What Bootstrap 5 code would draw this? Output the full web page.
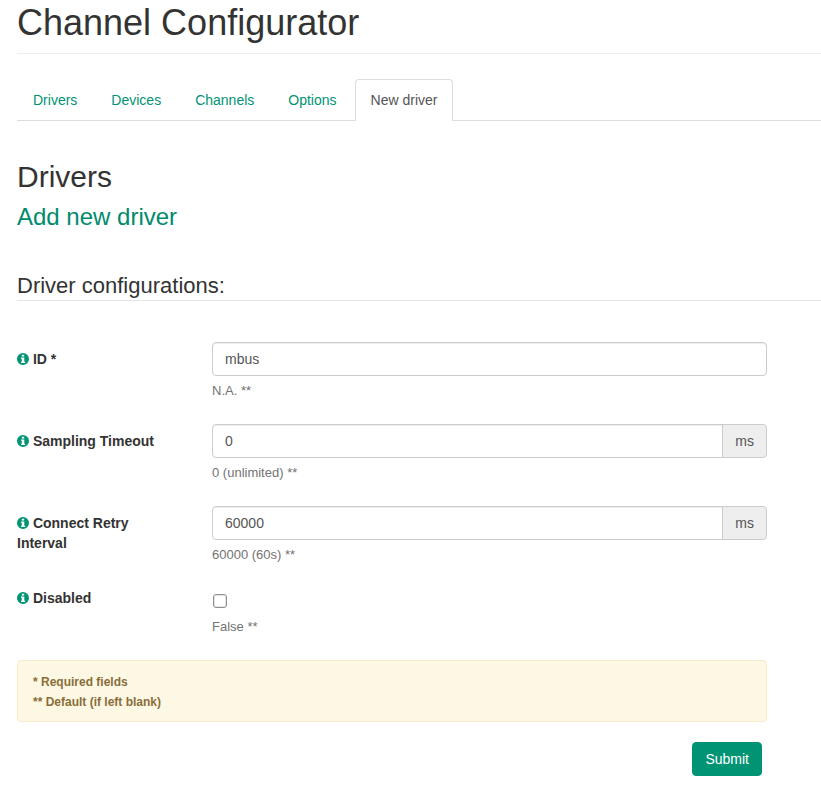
<!DOCTYPE html>
<html lang="en">
<head>
<meta charset="utf-8">
<meta name="viewport" content="width=device-width, initial-scale=1">
<title>Channel Configurator</title>
<link href="https://cdn.jsdelivr.net/npm/bootstrap@5.3.0/dist/css/bootstrap.min.css" rel="stylesheet">
<style>
body { font-family: "Liberation Sans", Arial, sans-serif; font-size: 14px; line-height: 20px; color: #333; --brand: #009374; }
.page { padding: 3px 0 12px 17px; }
h1, h2, h3, legend { color: #333; font-weight: 400; margin: 0; }
h1 { font-size: 36px; line-height: 40px; }
.page-title { padding-bottom: 10px; border-bottom: 1px solid #eee; margin-bottom: 25px; }
.nav-tabs { --bs-nav-link-padding-x: 15px; --bs-nav-link-padding-y: 10px; --bs-nav-link-color: var(--brand); --bs-nav-link-hover-color: #00614d; --bs-nav-tabs-border-color: #ddd; --bs-nav-tabs-border-radius: 4px; --bs-nav-tabs-link-active-color: #555; --bs-nav-tabs-link-active-bg: #fff; --bs-nav-tabs-link-active-border-color: #ddd #ddd #fff; gap: 2px; margin-bottom: 40px; }
h2 { font-size: 30px; line-height: 32px; margin-bottom: 10px; }
h3 { font-size: 24px; line-height: 28px; color: #008a6c; margin-bottom: 41px; }
legend { font-size: 22px; line-height: 28px; border-bottom: 1px solid #e5e5e5; margin-bottom: 41px; }
.config-form { padding-right: 54px; }
.config-form .row { --bs-gutter-x: 30px; margin-bottom: 23px; }
.config-form legend { width: calc(100% + 54px); }
.field-label { font-weight: 700; padding-top: 7px; }
.check-label { padding-top: 0; }
.info { width: 12px; height: 12px; fill: var(--brand); vertical-align: -1px; }
.form-control, .input-group-text { font-size: 14px; line-height: 20px; color: #555; padding: 6px 12px; border: 1px solid #ccc; border-radius: 4px; }
.form-control { box-shadow: inset 0 1px 1px rgba(0, 0, 0, .075); }
.input-group-text { background: #eee; }
.form-text { font-size: 13px; line-height: 20px; color: #737373; margin-top: 5px; }
.check-box { display: block; width: 14px; height: 14px; margin: 6px 0 9px 1px; appearance: none; background: #fff; border: 1px solid #8f8f8f; border-radius: 3px; box-shadow: inset 0 0 1px 1px #e4e4e4; }
.check-box:checked { background: var(--brand); }
.alert-note { font-size: 12px; font-weight: 700; color: #8a6d3b; background: #fcf8e3; border: 1px solid #faebcc; border-radius: 4px; padding: 11px 15px 9px; margin-bottom: 20px; }
.btn-brand { --bs-btn-color: #fff; --bs-btn-bg: var(--brand); --bs-btn-border-color: var(--brand); --bs-btn-hover-color: #fff; --bs-btn-hover-bg: #007a60; --bs-btn-hover-border-color: #007a60; --bs-btn-font-size: 14px; --bs-btn-line-height: 20px; --bs-btn-border-radius: 4px; margin-right: 5px; }
</style>
</head>
<body>
<svg class="d-none" aria-hidden="true">
  <symbol id="info-icon" viewBox="0 0 12 12">
    <path fill-rule="evenodd" d="M6 0a6 6 0 1 1 0 12A6 6 0 0 1 6 0ZM4.800 1.700V3.500h2.400V1.700ZM4 4.500v1.200h.8v3H4V10h4.200V8.700h-.9V4.500Z"/>
  </symbol>
</svg>
<main class="page">
  <header class="page-title"><h1>Channel Configurator</h1></header>
  <ul class="nav nav-tabs">
    <li class="nav-item"><a class="nav-link" href="#drivers">Drivers</a></li>
    <li class="nav-item"><a class="nav-link" href="#devices">Devices</a></li>
    <li class="nav-item"><a class="nav-link" href="#channels">Channels</a></li>
    <li class="nav-item"><a class="nav-link" href="#options">Options</a></li>
    <li class="nav-item"><a class="nav-link active" aria-current="page" href="#new">New driver</a></li>
  </ul>
  <h2>Drivers</h2>
  <h3>Add new driver</h3>
  <form class="config-form" id="new">
    <fieldset>
      <legend>Driver configurations:</legend>
      <div class="row">
        <label class="col-3 field-label" for="driver-id"><svg class="info" aria-hidden="true"><use href="#info-icon"/></svg> ID *</label>
        <div class="col-9">
          <input class="form-control" type="text" id="driver-id" value="mbus" required>
          <div class="form-text">N.A. **</div>
        </div>
      </div>
      <div class="row">
        <label class="col-3 field-label" for="timeout"><svg class="info" aria-hidden="true"><use href="#info-icon"/></svg> Sampling Timeout</label>
        <div class="col-9">
          <div class="input-group">
            <input class="form-control" type="text" id="timeout" value="0">
            <span class="input-group-text">ms</span>
          </div>
          <div class="form-text">0 (unlimited) **</div>
        </div>
      </div>
      <div class="row">
        <label class="col-3 field-label" for="retry"><svg class="info" aria-hidden="true"><use href="#info-icon"/></svg> Connect Retry Interval</label>
        <div class="col-9">
          <div class="input-group">
            <input class="form-control" type="text" id="retry" value="60000">
            <span class="input-group-text">ms</span>
          </div>
          <div class="form-text">60000 (60s) **</div>
        </div>
      </div>
      <div class="row">
        <label class="col-3 field-label check-label" for="disabled"><svg class="info" aria-hidden="true"><use href="#info-icon"/></svg> Disabled</label>
        <div class="col-9">
          <input class="check-box" type="checkbox" id="disabled">
          <div class="form-text mt-0">False **</div>
        </div>
      </div>
    </fieldset>
    <div class="alert-note">
      <div>* Required fields</div>
      <div>** Default (if left blank)</div>
    </div>
    <div class="d-flex justify-content-end"><button type="submit" class="btn btn-brand">Submit</button></div>
  </form>
</main>
<script src="https://cdn.jsdelivr.net/npm/bootstrap@5.3.0/dist/js/bootstrap.bundle.min.js"></script>
</body>
</html>
